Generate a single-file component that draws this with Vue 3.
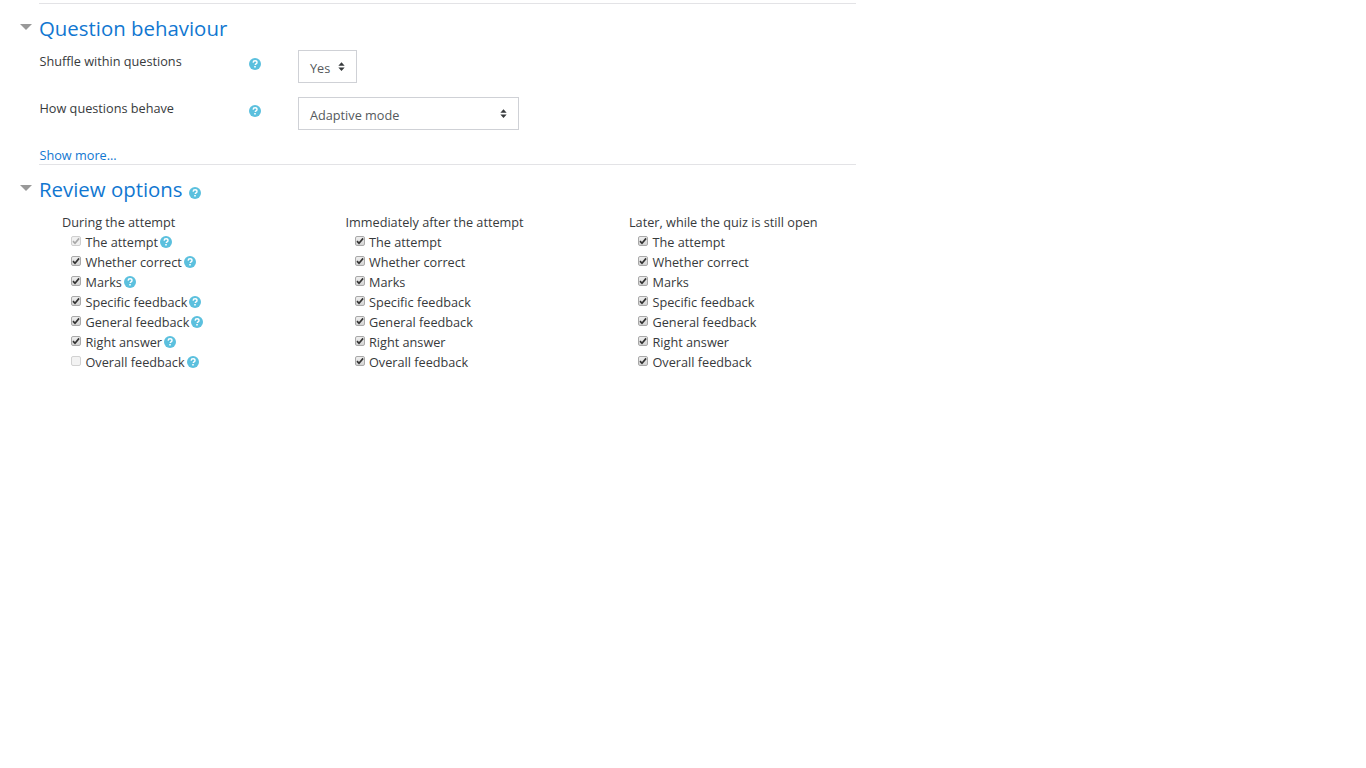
<script setup>
const fields = [
  { label: 'Shuffle within questions', value: 'Yes', cls: 'short' },
  { label: 'How questions behave', value: 'Adaptive mode', cls: 'long' },
]
const names = ['The attempt', 'Whether correct', 'Marks', 'Specific feedback', 'General feedback', 'Right answer', 'Overall feedback']
const columns = [
  {
    title: 'During the attempt',
    items: names.map((n, i) => ({ n, help: true, state: i === 0 ? 'locked' : i === 6 ? 'off' : 'on' })),
  },
  {
    title: 'Immediately after the attempt',
    items: names.map((n) => ({ n, help: false, state: 'on' })),
  },
  {
    title: 'Later, while the quiz is still open',
    items: names.map((n) => ({ n, help: false, state: 'on' })),
  },
]
</script>

<template>
  <div class="page">
    <section class="section first">
      <div class="legend">
        <span class="arrow"></span>
        <h3>Question behaviour</h3>
      </div>
      <div class="body">
        <div v-for="f in fields" :key="f.label" class="field">
          <div class="label">{{ f.label }}</div>
          <div class="help-cell">
            <svg class="help" viewBox="0 0 12 12"><circle cx="6" cy="6" r="6" fill="#5bc0de"/><path d="M4.1 4.6C4.2 3.4 5 2.8 6.1 2.8c1.1 0 1.9.7 1.9 1.6 0 .8-.5 1.2-1 1.5-.5.3-.7.5-.7 1v.2" fill="none" stroke="#fff" stroke-width="1.4"/><rect x="5.2" y="8" width="1.6" height="1.5" fill="#fff"/></svg>
          </div>
          <div class="select" :class="f.cls">
            <span>{{ f.value }}</span>
            <svg class="updown" viewBox="0 0 8 10"><path d="M4 0 7.6 4H.4zM4 10 .4 6h7.2z" fill="#373a3c"/></svg>
          </div>
        </div>
        <a class="more">Show more...</a>
      </div>
    </section>

    <section class="section">
      <div class="legend">
        <span class="arrow"></span>
        <h3>Review options</h3>
        <svg class="help title-help" viewBox="0 0 12 12"><circle cx="6" cy="6" r="6" fill="#5bc0de"/><path d="M4.1 4.6C4.2 3.4 5 2.8 6.1 2.8c1.1 0 1.9.7 1.9 1.6 0 .8-.5 1.2-1 1.5-.5.3-.7.5-.7 1v.2" fill="none" stroke="#fff" stroke-width="1.4"/><rect x="5.2" y="8" width="1.6" height="1.5" fill="#fff"/></svg>
      </div>
      <div class="columns">
        <div v-for="c in columns" :key="c.title" class="col">
          <div class="col-title">{{ c.title }}</div>
          <div v-for="it in c.items" :key="it.n" class="check-row">
            <span class="cb" :class="it.state">
              <svg v-if="it.state !== 'off'" viewBox="0 0 11 11"><path d="M2.2 5.6 4.4 8 8.9 2.6" fill="none" stroke="currentColor" stroke-width="1.8"/></svg>
            </span>
            <span class="text">{{ it.n }}</span>
            <svg v-if="it.help" class="help" viewBox="0 0 12 12"><circle cx="6" cy="6" r="6" fill="#5bc0de"/><path d="M4.1 4.6C4.2 3.4 5 2.8 6.1 2.8c1.1 0 1.9.7 1.9 1.6 0 .8-.5 1.2-1 1.5-.5.3-.7.5-.7 1v.2" fill="none" stroke="#fff" stroke-width="1.4"/><rect x="5.2" y="8" width="1.6" height="1.5" fill="#fff"/></svg>
          </div>
        </div>
      </div>
    </section>
  </div>
</template>

<style>
html, body { background: #fff; }
</style>

<style scoped>
.page {
  width: 836px;
  padding-left: 20px;
  font-family: "Open Sans", "Noto Sans", sans-serif;
  font-size: 12.7px;
  line-height: 20px;
  color: #373a3c;
}
.section { position: relative; }
.section::before {
  content: "";
  display: block;
  height: 1px;
  margin-left: 19px;
  background: #e3e3e6;
}
.section.first { padding-top: 3px; }
.legend {
  display: flex;
  align-items: center;
  height: 27px;
  margin-top: 11px;
}
.arrow {
  width: 0;
  height: 0;
  margin-right: 7px;
  margin-top: -3px;
  border-left: 6px solid transparent;
  border-right: 6px solid transparent;
  border-top: 6px solid #999;
}
h3 {
  margin: 0;
  font-size: 20.4px;
  font-weight: 400;
  line-height: 27px;
  color: #1177d1;
}
.title-help { margin-left: 6px; margin-top: 6px; }
.body { padding-left: 20px; }
.field {
  display: flex;
  align-items: flex-start;
  height: 47px;
}
.field:first-child { margin-top: 8px; }
.label { width: 209.5px; margin-top: 1px; margin-left: -0.5px; }
.help-cell { width: 49px; padding-top: 8px; display: flex; }
.help { width: 12px; height: 12px; flex: none; }
.select {
  display: flex;
  align-items: center;
  justify-content: space-between;
  box-sizing: border-box;
  height: 33px;
  padding: 2px 11px 0 11px;
  border: 1px solid #cfd1d6;
  color: #55595c;
}
.select.short { width: 59px; }
.select.long { width: 221px; }
.updown { width: 7px; height: 9px; margin-top: -2px; }
.more {
  display: block;
  margin-top: 1px;
  margin-left: -0.5px;
  height: 19px;
  line-height: 20px;
  color: #1177d1;
}
.columns {
  display: flex;
  margin-left: 42px;
  margin-top: 9px;
}
.col { flex: none; width: 283.5px; }
.col-title { height: 20px; white-space: nowrap; }
.check-row {
  display: flex;
  align-items: center;
  height: 20px;
  padding-left: 9px;
  white-space: nowrap;
}
.cb {
  box-sizing: border-box;
  width: 10px;
  height: 10px;
  margin-right: 4.5px;
  margin-top: -2px;
  flex: none;
  border: 1px solid #a9a9a9;
  border-radius: 2px;
  background: linear-gradient(#eee, #d4d4d4);
  color: #333;
  display: flex;
  align-items: center;
  justify-content: center;
}
.cb svg { width: 10px; height: 10px; flex: none; }
.cb.locked { border-color: #cfcfcf; color: #a8a8a8; background: #f0f0f0; }
.cb.off { border-color: #d2d2d2; background: #f3f3f3; }
.text { margin-right: 2px; }
</style>
